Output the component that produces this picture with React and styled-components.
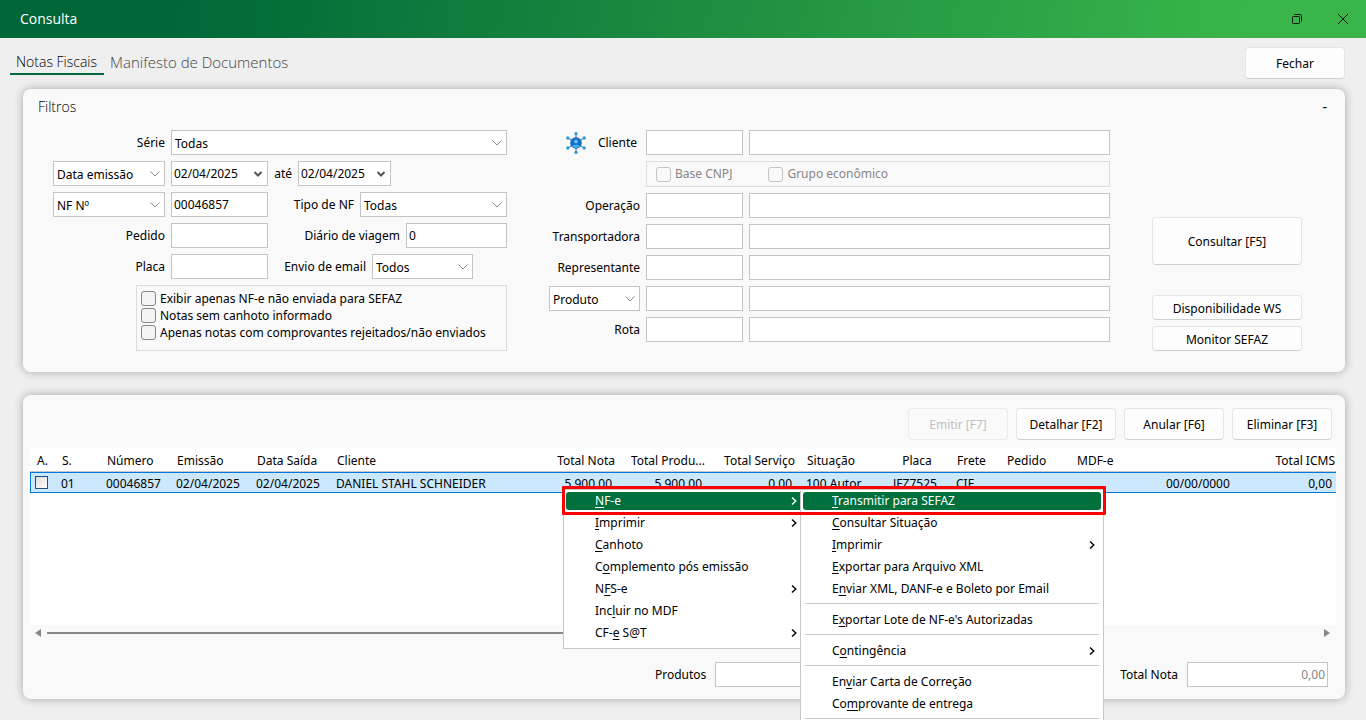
import React from "react";
import styled, { createGlobalStyle, css } from "styled-components";

const filterLookups = [
  { id: "operacao", label: "Operação" },
  { id: "transportadora", label: "Transportadora" },
  { id: "representante", label: "Representante" },
];

const columns = [
  { title: "A.", width: 25, value: "" },
  { title: "S.", width: 45, value: "01" },
  { title: "Número", width: 70, value: "00046857" },
  { title: "Emissão", width: 80, value: "02/04/2025" },
  { title: "Data Saída", width: 80, value: "02/04/2025" },
  { title: "Cliente", value: "DANIEL STAHL SCHNEIDER" },
  { title: "Total Nota", width: 80, value: "5.900,00", align: "right" },
  { title: "Total Produ...", width: 90, value: "5.900,00", align: "right" },
  { title: "Total Serviço", width: 90, value: "0,00", align: "right" },
  { title: "Situação", width: 82, value: "100 Autor" },
  { title: "Placa", width: 68, value: "JFZ7525", align: "center" },
  { title: "Frete", width: 50, value: "CIF" },
  { title: "Pedido", width: 70, value: "" },
  { title: "MDF-e", width: 90, value: "" },
  { title: "", width: 80, value: "00/00/0000" },
  { title: "Total ICMS", width: 100, value: "0,00", align: "right" },
];

// "_" goes before the access key of each entry
const contextMenu = [
  { text: "_NF-e", sub: true, active: true },
  { text: "_Imprimir", sub: true },
  { text: "_Canhoto" },
  { text: "C_omplemento pós emissão" },
  { text: "N_FS-e", sub: true },
  { text: "Inc_luir no MDF" },
  { text: "CF-_e S@T", sub: true },
];

const nfeMenu = [
  { text: "_Transmitir para SEFAZ", active: true },
  { text: "_Consultar Situação" },
  { text: "_Imprimir", sub: true },
  { text: "_Exportar para Arquivo XML" },
  { text: "E_nviar XML, DANF-e e Boleto por Email" },
  { divider: true },
  { text: "E_xportar Lote de NF-e's Autorizadas" },
  { divider: true },
  { text: "C_ontingência", sub: true },
  { divider: true },
  { text: "En_viar Carta de Correção" },
  { text: "Co_mprovante de entrega" },
  { divider: true },
];

const Chevron = ({ bold }) => (
  <svg width="10" height="6" viewBox="0 0 10 6" fill="none" aria-hidden="true">
    <path
      d={bold ? "M1.5 1L5 4.5L8.5 1" : "M0.5 0.5L5 5L9.5 0.5"}
      stroke={bold ? "#555" : "#8c8c8c"}
      strokeWidth={bold ? 2 : 1}
    />
  </svg>
);

const SubArrow = () => (
  <svg width="6" height="8" viewBox="0 0 6 8" fill="none" aria-hidden="true">
    <path d="M1 0.5L4.8 4L1 7.5" stroke="currentColor" strokeWidth="1.4" />
  </svg>
);

const NetworkIcon = () => (
  <svg width="22" height="24" viewBox="0 0 22 24" aria-hidden="true">
    <g stroke="#7d8790" strokeWidth="1.4">
      <path d="M11 3V21M3 7L19 17M19 7L3 17" />
    </g>
    <circle cx="11" cy="12" r="5.8" fill="#0f6cc4" />
    <circle cx="11" cy="10.4" r="2" fill="#5cc0f5" />
    <path d="M7 15.5C7.4 12.8 14.6 12.8 15 15.5C13 17.8 9 17.8 7 15.5Z" fill="#3fa9ec" />
    <g fill="#2a9fd8">
      <circle cx="11" cy="2.6" r="1.7" />
      <circle cx="11" cy="21.4" r="1.7" />
      <circle cx="2.8" cy="7" r="1.7" />
      <circle cx="19.2" cy="7" r="1.7" />
      <circle cx="2.8" cy="17" r="1.7" />
      <circle cx="19.2" cy="17" r="1.7" />
    </g>
  </svg>
);

const Dropdown = ({ id, label, value, width, grow }) => (
  <SelectBox $width={width} $grow={grow}>
    <select id={id} aria-label={label} defaultValue={value}>
      <option>{value}</option>
    </select>
    <Chevron />
  </SelectBox>
);

const DateField = ({ id, label, value, width }) => (
  <DateBox $width={width}>
    <input id={id} aria-label={label} defaultValue={value} />
    <button type="button" aria-label="Abrir calendário">
      <Chevron bold />
    </button>
  </DateBox>
);

const Lookup = ({ id, name }) => (
  <>
    <TextInput id={id} aria-label={name} />
    <TextInput aria-label={`${name} descrição`} />
  </>
);

const MenuList = ({ items }) =>
  items.map((item, i) => {
    if (item.divider) return <Divider key={i} />;
    const [before, after] = item.text.split("_");
    return (
      <MenuItem key={i} type="button" role="menuitem" $active={item.active}>
        <span>
          {before}
          <u>{after[0]}</u>
          {after.slice(1)}
        </span>
        {item.sub && <SubArrow />}
      </MenuItem>
    );
  });

const App = () => {
  return (
    <Window>
      <GlobalStyle />
      <TitleBar>
        <Title>Consulta</Title>
        <WindowButton type="button" aria-label="Restaurar">
          <svg width="10" height="10" viewBox="0 0 10 10" fill="none" stroke="#111">
            <rect x="0.5" y="2.5" width="7" height="7" rx="0.8" />
            <path d="M2.5 0.5H8C9 0.5 9.5 1 9.5 2V7.5" />
          </svg>
        </WindowButton>
        <WindowButton type="button" aria-label="Fechar janela">
          <svg width="10" height="10" viewBox="0 0 10 10" fill="none" stroke="#111">
            <path d="M0 0L10 10M10 0L0 10" />
          </svg>
        </WindowButton>
      </TitleBar>

      <TopBar>
        <Tabs>
          <Tab href="#notas" $active>
            Notas Fiscais
          </Tab>
          <Tab href="#manifesto">Manifesto de Documentos</Tab>
        </Tabs>
        <Button type="button">Fechar</Button>
      </TopBar>

      <Content>
        <Panel>
          <PanelHeader>
            <PanelTitle>Filtros</PanelTitle>
            <CollapseButton type="button" aria-label="Recolher filtros">
              -
            </CollapseButton>
          </PanelHeader>
          <Filters>
            <FilterColumn>
              <Row>
                <Label htmlFor="serie" $width={112}>
                  Série
                </Label>
                <Dropdown id="serie" value="Todas" grow />
              </Row>
              <Row>
                <Dropdown label="Tipo de data" value="Data emissão" width={112} />
                <DateField id="de" label="Data inicial" value="02/04/2025" width={97} />
                <Label htmlFor="ate" $width={18}>
                  até
                </Label>
                <DateField id="ate" value="02/04/2025" width={93} />
              </Row>
              <Row>
                <Dropdown label="Tipo de número" value="NF Nº" width={112} />
                <TextInput aria-label="Número" defaultValue="00046857" $width={97} />
                <Label htmlFor="tipo">Tipo de NF</Label>
                <Dropdown id="tipo" value="Todas" width={147} />
              </Row>
              <Row>
                <Label htmlFor="pedido" $width={112}>
                  Pedido
                </Label>
                <TextInput id="pedido" $width={97} />
                <Label htmlFor="diario">Diário de viagem</Label>
                <TextInput id="diario" defaultValue="0" $width={101} />
              </Row>
              <Row $inset={34}>
                <Label htmlFor="placa" $width={112}>
                  Placa
                </Label>
                <TextInput id="placa" $width={97} />
                <Label htmlFor="email">Envio de email</Label>
                <Dropdown id="email" value="Todos" width={101} />
              </Row>
              <CheckGroup>
                <CheckLabel>
                  <Checkbox type="checkbox" />
                  Exibir apenas NF-e não enviada para SEFAZ
                </CheckLabel>
                <CheckLabel>
                  <Checkbox type="checkbox" />
                  Notas sem canhoto informado
                </CheckLabel>
                <CheckLabel>
                  <Checkbox type="checkbox" />
                  Apenas notas com comprovantes rejeitados/não enviados
                </CheckLabel>
              </CheckGroup>
            </FilterColumn>

            <LookupColumn>
              <LookupRow>
                <ClientLabel htmlFor="cliente">
                  <NetworkIcon />
                  Cliente
                </ClientLabel>
                <Lookup id="cliente" name="Cliente" />
              </LookupRow>
              <LookupRow>
                <ClientOptions>
                  <CheckLabel $disabled>
                    <Checkbox type="checkbox" disabled />
                    Base CNPJ
                  </CheckLabel>
                  <CheckLabel $disabled>
                    <Checkbox type="checkbox" disabled />
                    Grupo econômico
                  </CheckLabel>
                </ClientOptions>
              </LookupRow>
              {filterLookups.map(({ id, label }) => (
                <LookupRow key={id}>
                  <Label htmlFor={id}>{label}</Label>
                  <Lookup id={id} name={label} />
                </LookupRow>
              ))}
              <LookupRow>
                <Dropdown label="Tipo de item" value="Produto" />
                <Lookup name="Produto" />
              </LookupRow>
              <LookupRow>
                <Label htmlFor="rota">Rota</Label>
                <Lookup id="rota" name="Rota" />
              </LookupRow>
            </LookupColumn>

            <Actions>
              <Button type="button" $size="large">
                Consultar [F5]
              </Button>
              <Button type="button" $size="small">
                Disponibilidade WS
              </Button>
              <Button type="button" $size="small">
                Monitor SEFAZ
              </Button>
            </Actions>
          </Filters>
        </Panel>

        <Panel>
          <Toolbar>
            <Button type="button" disabled>
              Emitir [F7]
            </Button>
            <Button type="button">Detalhar [F2]</Button>
            <Button type="button">Anular [F6]</Button>
            <Button type="button">Eliminar [F3]</Button>
          </Toolbar>
          <GridArea>
            <Table>
              <colgroup>
                {columns.map((col, i) => (
                  <col key={i} width={col.width} />
                ))}
              </colgroup>
              <thead>
                <tr>
                  {columns.map((col, i) => (
                    <HeadCell key={i} $align={col.align}>
                      {col.title}
                    </HeadCell>
                  ))}
                </tr>
              </thead>
              <tbody>
                <tr>
                  {columns.map((col, i) => (
                    <Cell key={i} $align={col.align}>
                      {i === 0 ? (
                        <RowCheck type="checkbox" aria-label="Selecionar nota" />
                      ) : (
                        col.value
                      )}
                    </Cell>
                  ))}
                </tr>
              </tbody>
            </Table>
          </GridArea>
          <ScrollBar>
            <svg width="6" height="8" viewBox="0 0 6 8" fill="#868686">
              <path d="M6 0V8L0 4Z" />
            </svg>
            <Track>
              <Thumb />
            </Track>
            <svg width="6" height="8" viewBox="0 0 6 8" fill="#868686">
              <path d="M0 0V8L6 4Z" />
            </svg>
          </ScrollBar>
          <Totals>
            <Total>
              <Label htmlFor="produtos">Produtos</Label>
              <TotalInput id="produtos" readOnly />
            </Total>
            <Total>
              <Label htmlFor="total">Total Nota</Label>
              <TotalInput id="total" readOnly value="0,00" />
            </Total>
          </Totals>
        </Panel>
      </Content>

      <MenuLayer>
        <Menu role="menu" $width={243}>
          <MenuList items={contextMenu} />
        </Menu>
        <Menu role="menu" $width={304}>
          <MenuList items={nfeMenu} />
        </Menu>
        <Highlight />
      </MenuLayer>
    </Window>
  );
};

export default App;

const GlobalStyle = createGlobalStyle`
  * {
    box-sizing: border-box;
  }
  body {
    margin: 0;
    background: #efefef;
    color: #000;
    font: 12px/16px "Noto Sans", "Open Sans", sans-serif;
  }
  input, select, button {
    margin: 0;
    color: inherit;
    font: inherit;
  }
`;

const Window = styled.div`
  position: relative;
  min-height: 100vh;
  overflow: hidden;
`;

const TitleBar = styled.header`
  display: flex;
  align-items: center;
  height: 38px;
  padding-left: 20px;
  background: linear-gradient(100deg, #006637 12%, #39b54a 91%);
`;

const Title = styled.h1`
  flex: 1;
  margin: 0;
  color: #fff;
  font-family: "Open Sans", sans-serif;
  font-size: 14px;
  font-weight: 400;
  line-height: 20px;
`;

const WindowButton = styled.button`
  display: flex;
  align-items: center;
  justify-content: center;
  width: 46px;
  height: 38px;
  padding: 0;
  border: 0;
  background: none;
`;

const TopBar = styled.div`
  display: flex;
  justify-content: space-between;
  height: 51px;
  padding: 9px 21px 0 10px;
`;

const Tabs = styled.nav`
  display: flex;
  align-items: flex-start;
`;

const Tab = styled.a`
  height: 28px;
  padding: 3px 7px 3px 6px;
  border-bottom: 2px solid ${(p) => (p.$active ? "#036839" : "transparent")};
  color: ${(p) => (p.$active ? "#000" : "#444")};
  font-family: "Open Sans", sans-serif;
  font-size: ${(p) => (p.$active ? 14 : 15)}px;
  font-weight: 300;
  line-height: 24px;
  text-decoration: none;
`;

const buttonSizes = {
  large: { width: 150, height: 48 },
  small: { width: 150, height: 25 },
  normal: { width: 100, height: 32 },
};

const Button = styled.button`
  width: ${(p) => buttonSizes[p.$size || "normal"].width}px;
  height: ${(p) => buttonSizes[p.$size || "normal"].height}px;
  padding: 2px 0 0;
  border: 1px solid #e5e5e5;
  border-bottom-color: #d0d0d0;
  border-radius: 4px;
  background: #fdfdfd;

  &:disabled {
    border-color: #ebebeb;
    background: #fafafa;
    color: #c0c0c0;
  }
`;

const Content = styled.main`
  display: flex;
  flex-direction: column;
  gap: 23px;
  padding: 0 21px 21px 23px;
`;

const Panel = styled.section`
  border-radius: 8px;
  background: #f9f9f9;
  box-shadow: 0 0 10px rgba(0, 0, 0, 0.3);
`;

const PanelHeader = styled.div`
  display: flex;
  align-items: center;
  justify-content: space-between;
  height: 41px;
  padding: 0 16px 6px 15px;
`;

const PanelTitle = styled.h2`
  margin: 0;
  font-family: "Open Sans", sans-serif;
  font-size: 14px;
  font-weight: 300;
`;

const CollapseButton = styled.button`
  padding: 0 2px;
  border: 0;
  background: none;
  font-size: 14px;
`;

const Filters = styled.div`
  display: flex;
  gap: 42px;
  padding: 0 43px 21px 30px;
`;

const FilterColumn = styled.div`
  display: flex;
  flex-direction: column;
  gap: 6px;
  width: 454px;
`;

const Row = styled.div`
  display: flex;
  align-items: center;
  gap: 6px;
  padding-right: ${(p) => p.$inset || 0}px;
`;

const Label = styled.label`
  ${(p) => (p.$width ? `width: ${p.$width}px;` : "flex: 1;")}
  text-align: right;
  white-space: nowrap;
`;

const fieldBox = css`
  height: 25px;
  border: 1px solid #c4c4c4;
  background: #fff;
`;

const TextInput = styled.input`
  ${fieldBox}
  width: ${(p) => (p.$width ? `${p.$width}px` : "100%")};
  min-width: 0;
  padding: 0 2px;
`;

const SelectBox = styled.div`
  ${fieldBox}
  display: grid;
  align-items: center;
  ${(p) => (p.$grow ? "flex: 1;" : "")}
  width: ${(p) => (p.$width ? `${p.$width}px` : "auto")};

  select {
    grid-area: 1 / 1;
    height: 23px;
    padding: 2px 3px 0;
    border: 0;
    background: none;
    appearance: none;
  }

  svg {
    grid-area: 1 / 1;
    justify-self: end;
    margin-right: 4px;
    pointer-events: none;
  }
`;

const DateBox = styled.div`
  ${fieldBox}
  display: flex;
  width: ${(p) => p.$width}px;

  input {
    flex: 1;
    min-width: 0;
    padding: 0 2px;
    border: 0;
    background: none;
  }

  button {
    display: flex;
    align-items: center;
    padding: 0 4px;
    border: 0;
    background: none;
  }
`;

const CheckGroup = styled.div`
  align-self: flex-end;
  width: 371px;
  height: 66px;
  padding: 4px;
  border: 1px solid #dcdcdc;
`;

const CheckLabel = styled.label`
  display: flex;
  align-items: center;
  gap: 4px;
  height: 17px;
  color: ${(p) => (p.$disabled ? "#868686" : "#000")};
  white-space: nowrap;
`;

const Checkbox = styled.input`
  width: 15px;
  height: 15px;
  border: 1px solid #868686;
  border-radius: 3px;
  background: #f3f3f3;
  appearance: none;

  &:disabled {
    border-color: #c3c3c3;
    background: #f9f9f9;
  }
`;

const LookupColumn = styled.div`
  display: flex;
  flex: 1;
  flex-direction: column;
  gap: 6px;
`;

const LookupRow = styled.div`
  display: grid;
  grid-template-columns: 91px 97px 1fr;
  align-items: center;
  gap: 6px;
`;

const ClientLabel = styled(Label)`
  display: flex;
  align-items: center;
  justify-content: flex-end;
  gap: 11px;
  padding-right: 3px;
`;

const ClientOptions = styled.div`
  display: flex;
  grid-column: 2 / 4;
  align-items: center;
  gap: 36px;
  height: 26px;
  padding-left: 9px;
  border: 1px solid #dcdcdc;
`;

const Actions = styled.div`
  display: flex;
  flex-direction: column;
  justify-content: flex-end;
  gap: 6px;

  ${Button}:first-child {
    margin-bottom: 24px;
  }
`;

const Toolbar = styled.div`
  display: flex;
  justify-content: flex-end;
  gap: 8px;
  padding: 13px 13px 8px;
`;

const GridArea = styled.div`
  height: 177px;
  margin: 0 9px 0 7px;
  overflow: hidden;
  background: #fff;
`;

const Table = styled.table`
  width: calc(100% + 4px);
  border-collapse: separate;
  border-spacing: 0;
  table-layout: fixed;
`;

const HeadCell = styled.th`
  height: 24px;
  padding: 3px 5px 0 7px;
  border-bottom: 1px solid #c8c8c8;
  font-weight: 400;
  text-align: ${(p) => p.$align || "left"};
  white-space: nowrap;
`;

const Cell = styled.td`
  height: 21px;
  padding: 3px 8px 0 6px;
  border: solid #0078d7;
  border-width: 1px 0;
  background: #cce8ff;
  text-align: ${(p) => p.$align || "left"};
  white-space: nowrap;

  &:first-child {
    padding: 0 4px;
    border-left-width: 1px;
  }
`;

const RowCheck = styled.input`
  display: block;
  width: 13px;
  height: 13px;
  border: 1px solid #1c5180;
  background: linear-gradient(135deg, #dcdcd7, #fff);
  appearance: none;
`;

const ScrollBar = styled.div`
  display: flex;
  align-items: center;
  gap: 6px;
  height: 16px;
  margin: 0 15px 0 12px;
`;

const Track = styled.div`
  flex: 1;
`;

const Thumb = styled.div`
  width: 60%;
  height: 2px;
  background: #868686;
`;

const Totals = styled.div`
  display: flex;
  justify-content: space-between;
  margin-left: 632px;
  padding: 21px 17px 12px 0;
`;

const Total = styled.div`
  display: flex;
  align-items: center;
  gap: 9px;
`;

const TotalInput = styled(TextInput)`
  width: 141px;
  color: #868686;
  text-align: right;
`;

const MenuLayer = styled.div`
  position: absolute;
  top: 489px;
  left: 563px;
  display: flex;
  align-items: flex-start;
`;

const Menu = styled.div`
  display: flex;
  flex-direction: column;
  width: ${(p) => p.$width}px;
  padding: 0 2px 4px;
  border: 1px solid #c8c8c8;
  background: #fff;

  & + & {
    margin-left: -6px;
  }
`;

const MenuItem = styled.button`
  display: flex;
  align-items: center;
  justify-content: space-between;
  height: 18px;
  margin: 2px 0;
  padding: 0 6px 0 29px;
  border: 0;
  border-radius: 3px;
  background: ${(p) => (p.$active ? "#00703c" : "none")};
  color: ${(p) => (p.$active ? "#fff" : "#000")};
  white-space: nowrap;

  u {
    text-underline-offset: 2px;
  }
`;

const Divider = styled.div`
  height: 1px;
  margin: 3px 2px 5px;
  background: #c8c8c8;
`;

const Highlight = styled.div`
  position: absolute;
  top: -3px;
  right: -2px;
  left: -1px;
  height: 29px;
  border: 3px solid #f00;
  border-radius: 1px;
  pointer-events: none;
`;
